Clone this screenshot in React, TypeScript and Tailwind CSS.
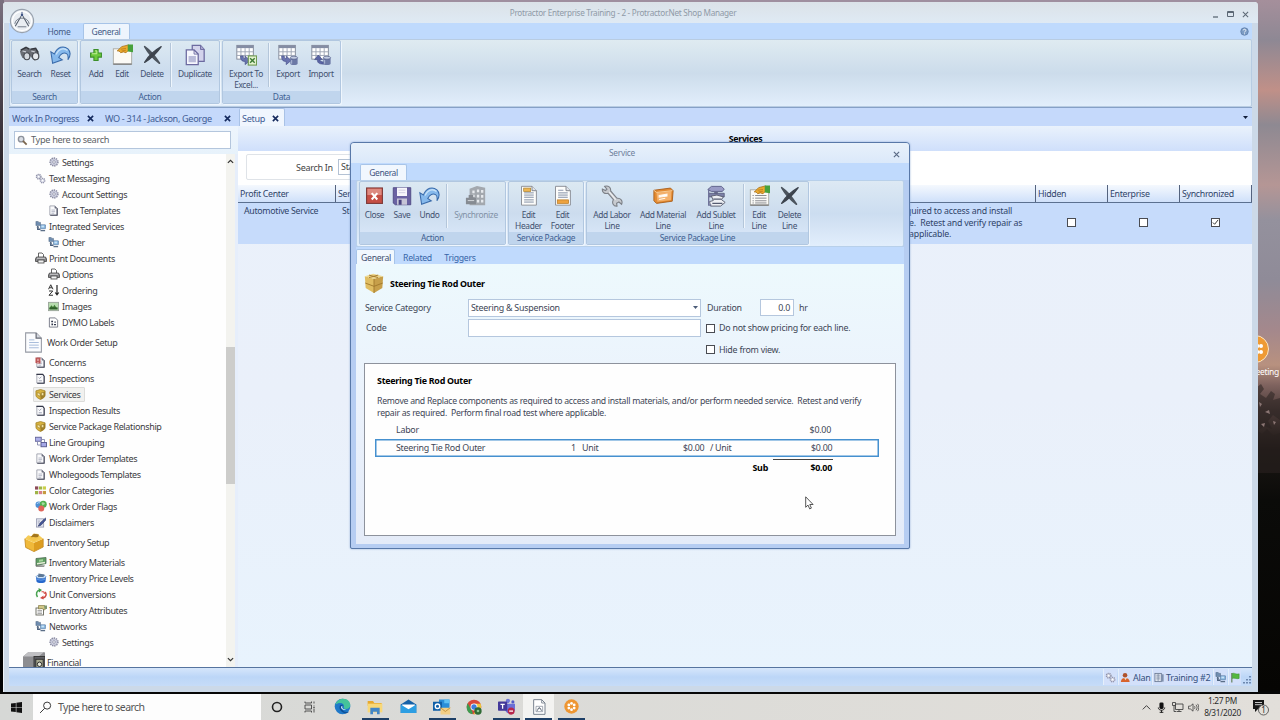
import React from "react";

type Kids = { children?: React.ReactNode };

/* ---------- icon helpers ---------- */
function Ico({ s = 12, children }: { s?: number } & Kids) {
  return (
    <svg width={s} height={s} viewBox="0 0 24 24" fill="none" className="block shrink-0">
      {children}
    </svg>
  );
}

const GearI = ({ s = 10 }) => (
  <Ico s={s}>
    <circle cx="12" cy="12" r="9.200" stroke="#8486a0" strokeWidth="4" strokeDasharray="3.200 2" />
    <circle cx="12" cy="12" r="8" fill="#cfd1e2" stroke="#8d8fa6" strokeWidth="1" />
    <circle cx="12" cy="12" r="3.200" fill="#f5f6fb" stroke="#85879c" strokeWidth="1.600" />
  </Ico>
);
const GearsI = ({ s = 11 }) => (
  <Ico s={s}>
    <circle cx="8" cy="8" r="5" fill="#d3d5e2" stroke="#9092a8" strokeWidth="3" strokeDasharray="2.4 1.4" />
    <circle cx="8" cy="8" r="1.8" fill="#fff" />
    <circle cx="16.5" cy="16.5" r="4.8" fill="#dcdeea" stroke="#9395ac" strokeWidth="3" strokeDasharray="2.4 1.4" />
    <circle cx="16.5" cy="16.5" r="1.6" fill="#fff" />
  </Ico>
);
const NetI = ({ s = 11 }) => (
  <Ico s={s}>
    <path d="M2 1h5l1 2h4v7H2z" fill="#6f8db0" stroke="#3f5876" />
    <path d="M6 11v7h6" stroke="#4a5f7c" strokeWidth="3" />
    <rect x="12" y="8" width="11" height="9" rx="1" fill="#7fb0dc" stroke="#42628a" />
    <rect x="14" y="10" width="6" height="4" fill="#c9e3f6" />
    <path d="M12 21h10M4 14h4" stroke="#5c6f88" strokeWidth="2.600" />
  </Ico>
);
const PrinterI = ({ s = 12 }) => (
  <Ico s={s}>
    <path d="M7 10V2h7l3 3v5" fill="#fff" stroke="#555" strokeWidth="1.800" />
    <path d="M3 10h18l2 4v5H1v-5z" fill="#8a8a8e" stroke="#444" strokeWidth="1.600" />
    <rect x="6" y="16" width="12" height="6" fill="#f2f2f2" stroke="#444" strokeWidth="1.600" />
    <path d="M4 12.500h16" stroke="#e0e0e0" strokeWidth="1.600" />
  </Ico>
);
const SortI = ({ s = 12 }) => (
  <Ico s={s}>
    <path d="M1 10.500L5.500 1.500l4.500 9M3 7.500h5M2 14h7.500L2 22.500H10" stroke="#333" strokeWidth="2" />
    <path d="M18 2v19M14.500 17l3.500 4.500 3.500-4.500" stroke="#222" strokeWidth="2.400" />
  </Ico>
);
const ImageI = ({ s = 11 }) => (
  <Ico s={s}>
    <rect x="1" y="3" width="22" height="18" fill="#b7dcae" stroke="#9aa59a" strokeWidth="2" />
    <path d="M3 17l4-8 4 4 3-5 6 9z" fill="#3f7d34" />
    <rect x="3" y="14" width="18" height="4.500" fill="#2f5f2b" />
  </Ico>
);
const DocI = ({ s = 11, red = false }: { s?: number; red?: boolean }) => (
  <Ico s={s}>
    <path d="M4 2h11l5 5v15H4z" fill="#fafafc" stroke="#8b8e9c" strokeWidth="1.600" />
    <path d="M20 7v15.500H5" stroke="#45485a" strokeWidth="2.400" />
    <path d="M15 2v5h5" fill="#6d7080" stroke="#6b6e7c" />
    <path d="M7.500 11h8M7.500 14.500h8M7.500 18h6" stroke="#9a9fb2" strokeWidth="1.500" />
    {red && <path d="M1 1h11v13H6L1 13z" fill="#b94848" opacity=".9" />}
    {red && <path d="M6.500 4v5M6.500 11v2" stroke="#f7dede" strokeWidth="2" />}
  </Ico>
);
const CheckDocI = ({ s = 11 }) => (
  <Ico s={s}>
    <path d="M4 3h12l4 4v15H4z" fill="#fafafc" stroke="#8b8e9c" strokeWidth="1.600" />
    <path d="M3 3h14l3 4v15.500H5" stroke="#35384a" strokeWidth="2.400" />
    <path d="M8 10l2 2 4-4M8 17h7" stroke="#8b90a4" strokeWidth="1.800" />
  </Ico>
);
const LabelDocI = ({ s = 11 }) => (
  <Ico s={s}>
    <path d="M3 2h13l5 5v15H3z" fill="#fff" stroke="#666a78" strokeWidth="1.800" />
    <path d="M7 8h4v3.500H7zM7.500 14H11v4H7.500zM14 10h3v2.500h-3zM13 15h4.500v3H13z" fill="#33384c" />
  </Ico>
);
const ShieldBoxI = ({ s = 11 }) => (
  <Ico s={s}>
    <path d="M2 4l10-3 10 3v10c0 4-5 6-10 9-5-3-10-5-10-9z" fill="#d7b23f" stroke="#94731b" strokeWidth="1.400" />
    <path d="M12 10l10-5v9c0 4-5 6-10 9z" fill="#a07f28" />
    <path d="M5 8l6 2v6l-6-3zM14 8h5v6h-5z" fill="#f7e7a8" stroke="#8a6d1c" />
  </Ico>
);
const GroupI = ({ s = 12 }) => (
  <Ico s={s}>
    <rect x="0.500" y="2.500" width="12" height="8" fill="#aeb0ea" stroke="#5c5f94" strokeWidth="1.800" />
    <path d="M5 12v6h6M14 7h5v5" stroke="#777ba4" strokeWidth="1.600" />
    <rect x="12" y="13" width="11" height="8.500" fill="#a4a7e6" stroke="#54578c" strokeWidth="1.800" />
  </Ico>
);
const ColorsI = ({ s = 11 }) => (
  <Ico s={s}>
    <path d="M0 3h7v7H0z" fill="#8c4a58" />
    <path d="M8.500 3h7v7h-7zM0 13h7v7H0z" fill="#9fb447" />
    <path d="M17 3h7v7h-7z" fill="#c9cf4a" />
    <path d="M8.500 13h7v7h-7z" fill="#d77f8d" />
    <path d="M17 13h7v7h-7z" fill="#c69a3f" />
  </Ico>
);
const FlagsI = ({ s = 12 }) => (
  <Ico s={s}>
    <circle cx="7.500" cy="9.500" r="6.500" fill="#4b8fd6" />
    <circle cx="16.500" cy="8.500" r="7" fill="#52b04e" />
    <circle cx="12.500" cy="17" r="6" fill="#e0655a" />
    <path d="M13 6c2-3 6-1 7 2l-5 3z" fill="#c8f0c0" opacity=".7" />
    <path d="M4 8c1-3 4-3 6-2" stroke="#cfe6fb" strokeWidth="1.600" />
  </Ico>
);
const DisclaimI = ({ s = 11 }) => (
  <Ico s={s}>
    <rect x="3" y="4" width="16" height="18" fill="#e4e6f0" stroke="#8a8fa8" strokeWidth="1.600" />
    <path d="M6 9h5M6 13h4" stroke="#8a8fa8" strokeWidth="1.400" />
    <path d="M23 2L11 13l-4 7 6-2L24 6z" fill="#44579a" stroke="#26305c" strokeWidth="1.200" />
  </Ico>
);
const MoneyI = ({ s = 12 }) => (
  <Ico s={s}>
    <path d="M2 5l20-2v12L2 19z" fill="#5f9f63" stroke="#4c6b50" strokeWidth="1.600" />
    <path d="M4 14l16-2.500v3L4 17z" fill="#e6ecd8" />
    <path d="M1 18.500l19 .5-2 2.500H2z" fill="#70756f" />
    <path d="M8 7.500l8-1v4l-8 1z" fill="#a6d59c" />
  </Ico>
);
const PriceI = ({ s = 12 }) => (
  <Ico s={s}>
    <path d="M2 10l1 9c2 4 16 4 18 0l1-9z" fill="#2768cc" />
    <ellipse cx="12" cy="9.500" rx="10" ry="3.500" fill="#d6e8fa" stroke="#3a74bd" strokeWidth="1.200" />
    <path d="M7 3l12 2-2 5H6z" fill="#5d7896" />
    <path d="M4 14c4 3 12 3 16 0" stroke="#6da4ec" strokeWidth="1.800" />
  </Ico>
);
const ConvI = ({ s = 12 }) => (
  <Ico s={s}>
    <path d="M10 4C3 5 1 12 5 18" stroke="#4aa352" strokeWidth="3" />
    <path d="M7 0l7 4-6 5z" fill="#3e9a45" />
    <path d="M16 20c6-1 8-8 4-12" stroke="#cf4b44" strokeWidth="3" />
    <path d="M10 20l7-5v8z" fill="#cf4b44" />
    <path d="M13 8c3-2 6 0 6 4" stroke="#dd6f68" strokeWidth="2.600" />
  </Ico>
);
const AttrI = ({ s = 12 }) => (
  <Ico s={s}>
    <rect x="2" y="8" width="15" height="14" fill="#fff" stroke="#66675c" strokeWidth="1.800" />
    <path d="M5 13h9M5 16h9M5 19h9" stroke="#888" strokeWidth="1.400" />
    <path d="M7 3h12l4 5-4 4-5-3-7 1z" fill="#cfc686" stroke="#7e7440" strokeWidth="1.300" />
    <path d="M18 3h6v7h-5z" fill="#7f9770" />
  </Ico>
);
const BigDocI = () => (
  <Ico s={21}>
    <path d="M3 1h12l6 6v16H3z" fill="#fbfcfe" stroke="#9599a3" strokeWidth="1.200" />
    <path d="M15 1v6h6" fill="#d4d8e0" stroke="#666a75" strokeWidth="1.400" />
    <path d="M7 9h6M7 12h11M7 15h11M7 18h11" stroke="#9db3d6" strokeWidth="1" />
  </Ico>
);
const CrateI = () => (
  <Ico s={20}>
    <path d="M1 8l11 5v10.500L2 18.500z" fill="#f0b93a" />
    <path d="M12 13l11-5v10l-11 5.500z" fill="#dd9d20" />
    <path d="M1 8l4-4 4 1 2-3 5 0 2 2 5 4-11 5z" fill="#f6cc58" />
    <path d="M8 6l4-4 6 1-1 3-6 2z" fill="#a3761e" />
    <path d="M5 7l6-1 7 1-6 4z" fill="#f3c54b" />
    <path d="M1 8l1 10.500 10 5 11-5.500V8" stroke="#c48a20" strokeWidth="1" />
  </Ico>
);
const SafeI = () => (
  <Ico s={22}>
    <path d="M0 6l6-5h17l1 1v22H0z" fill="#8d8d90" />
    <path d="M0 6l6-5h17l-6 5H0z" fill="#c0c0c3" />
    <rect x="12" y="6" width="12" height="18" fill="#5e5f63" stroke="#333" />
    <rect x="14" y="9" width="8" height="12" fill="#a6a890" stroke="#2c2c2c" />
    <circle cx="18" cy="14.500" r="2.400" fill="#e8e8d8" stroke="#222" />
  </Ico>
);

/* ---------- ribbon icons ---------- */
const BinocI = () => (
  <Ico s={21}>
    <path d="M1 8l5-4 5 2 3 0 4-1 5 6v5l-5 3-6-6-3 4-5-1-2-4z" fill="#6a6d74" />
    <path d="M2 7l6-3 4 2M13 6l6-1 3 5" stroke="#36393f" strokeWidth="1.800" />
    <ellipse cx="9" cy="14" rx="3.400" ry="4" fill="#d4d8de" stroke="#484b52" strokeWidth="1.300" />
    <ellipse cx="19" cy="14" rx="3.600" ry="4" fill="#e6e9ee" stroke="#484b52" strokeWidth="1.300" />
    <path d="M4 8l4 1M14 8l4 1" stroke="#c9ccd4" strokeWidth="1.400" />
  </Ico>
);
const UndoI = () => (
  <Ico s={21}>
    <path d="M1 9l2 13 11-4-4-2.500c2-5 6-6 9-4.500 2 1.300 2 4 1.500 7 3-4.500 3.500-9 0-12.500-5-4-12-2.500-15.500 6z" fill="#86b9ec" stroke="#3b6cab" strokeWidth="1.200" />
    <path d="M7 12c3-7 9-8 13-4.500" stroke="#c6e1f8" strokeWidth="1.600" />
  </Ico>
);
const PlusI = () => (
  <Ico s={20}>
    <path d="M9.500 5.500h5v4h4v5h-4v4h-5v-4h-4v-5h4z" fill="#6cc93c" stroke="#3c8f2a" strokeWidth="1.300" />
    <path d="M11 7h2v3.500H7" stroke="#c5f09b" strokeWidth="1.200" />
  </Ico>
);
const EditI = ({ lines = false }) => (
  <Ico s={21}>
    <rect x="1.500" y="5.500" width="21" height="17.500" fill="#fbfaf6" stroke="#a6a69e" strokeWidth="1" />
    <path d="M1.500 23h21" stroke="#777" strokeWidth="1.200" />
    {lines && <path d="M4 12h1.500M7 12h13M4 15h1.500M7 15h13M4 18h1.500M7 18h13M4 20.500h1.500M7 20.500h13" stroke="#7c7e84" strokeWidth="1" />}
    <path d="M6 8l5-5 8-2v6l-3 3-3-1-3 1-2-2z" fill="#eaa92e" stroke="#a96f14" strokeWidth=".9" />
    <path d="M10 6l6-1M11 8l5-1" stroke="#b5761a" strokeWidth=".8" />
    <path d="M18 0.500h6v9l-6-1z" fill="#47a13d" />
  </Ico>
);
const DeleteI = () => (
  <Ico s={21}>
    <path d="M3 3c6 4 12 11 17 19C13 17 7 10 3 3z" fill="#4c545e" stroke="#4c545e" strokeWidth="1.800" strokeLinejoin="round" />
    <path d="M22 3C15 7 7 14 3 21c7-4 14-11 19-18z" fill="#3d444e" stroke="#3d444e" strokeWidth="1.400" strokeLinejoin="round" />
  </Ico>
);
const DupI = () => (
  <Ico s={22}>
    <path d="M9 1.500h9l4 4.500V19H9z" fill="#d3d3ec" stroke="#6c6aa0" strokeWidth="1.400" />
    <path d="M18 1.500V6h4" fill="#a8a6d0" stroke="#6c6aa0" />
    <path d="M2.500 6.500H11l4.500 4.500V22.500h-13z" fill="#f6f6fd" stroke="#6c6aa0" strokeWidth="1.400" />
    <path d="M11 6.500V11h4.500" stroke="#6c6aa0" />
    <path d="M5 13h8v7H5z" fill="#b9bbd9" />
  </Ico>
);
const TableBase = () => (
  <>
    <rect x="2" y="1.500" width="18" height="15" fill="#fff" stroke="#808797" />
    <rect x="2" y="1.500" width="18" height="3" fill="#848da4" />
    <path d="M2 8.500h18M2 12.500h18M6.500 4.500v12M11 4.500v12M15.500 4.500v12" stroke="#9ba3b4" strokeWidth="1" />
  </>
);
const ExcelI = () => (
  <Ico s={22}>
    <TableBase />
    <path d="M6 13c0 4 1 6 5 6v3.500l5.500-4.500L11 13v3c-2 0-2-1-2-3z" fill="#6a74b0" stroke="#3d4680" strokeWidth=".6" />
    <rect x="14.500" y="13" width="9" height="10" fill="#e3f2cf" stroke="#6f9a52" strokeWidth="1.200" />
    <path d="M16.500 15.500l5 5M21.500 15.500l-5 5" stroke="#3c7a34" strokeWidth="1.500" />
  </Ico>
);
const Cyl = () => (
  <>
    <path d="M14.500 15v6.500c0 2 8 2 8 0V15z" fill="#6c79a6" />
    <ellipse cx="18.500" cy="15" rx="4" ry="1.600" fill="#c3cce2" stroke="#4d5985" strokeWidth=".7" />
    <path d="M16 17.500v4" stroke="#b7c1dc" />
  </>
);
const ExportI = () => (
  <Ico s={22}>
    <TableBase />
    <path d="M5 13c0 4 1 6 5 6v3.500l5.500-4.500L10 13v3c-2 0-2-1-2-3z" fill="#6a74b0" stroke="#3d4680" strokeWidth=".6" />
    <Cyl />
  </Ico>
);
const ImportI = () => (
  <Ico s={22}>
    <TableBase />
    <path d="M15 22c-6 0-7-2-7-5H5l4-5 4.500 5H11c0 2 1 2.500 4 2.500z" fill="#5a64a4" stroke="#3d4680" strokeWidth=".6" />
    <Cyl />
  </Ico>
);
const CloseI = () => (
  <Ico s={19}>
    <rect x="2" y="2.500" width="20" height="19.500" fill="#c54e44" stroke="#7e3a38" strokeWidth="1.400" />
    <path d="M3 3.500h18v8H3z" fill="#dd8a80" />
    <path d="M8.500 9l7 8M15.500 9l-7 8" stroke="#fff" strokeWidth="2.600" />
  </Ico>
);
const SaveI = () => (
  <Ico s={20}>
    <path d="M1.500 2h21v20.500H4l-2.500-2z" fill="#6a62a2" stroke="#4a4380" />
    <rect x="6" y="2" width="12" height="10" fill="#f7f6fb" />
    <path d="M8 5h8M8 8h8" stroke="#c9c5dc" />
    <rect x="6" y="15" width="12" height="7.500" fill="#c7c5d6" />
    <rect x="8" y="16.500" width="3.500" height="6" fill="#4a4380" />
  </Ico>
);
const SyncI = () => (
  <Ico s={22}>
    <path d="M5 4l8-3 9 2v19H5z" fill="#a3a8ae" />
    <path d="M8 6h2.500v3H8zM13 5h2.500v3H13zM17.500 5.500h2.500v3h-2.500zM8 10.500h2.500V13H8zM13 10.500h2.500v3H13zM17.500 11h2.500v3h-2.500zM13 16h2.500v3H13zM17.500 16h2.500v3h-2.500z" fill="#e7eaee" />
    <path d="M1 14h11v7H1zM4 11h5v4H4z" fill="#868b92" />
    <path d="M3 17h7" stroke="#d9dce0" />
  </Ico>
);
const PageI = ({ footer = false }) => (
  <Ico s={21}>
    <path d="M4 1.500h12l5 5V23H4z" fill="#fdfdfb" stroke="#8b8f96" strokeWidth="1.100" />
    <path d="M16 1.500v5h5" fill="#dfe3ea" stroke="#777b84" />
    <path d="M7 9h11M7 11.500h11M7 14h11" stroke="#7f8ca3" strokeWidth="1.100" />
    {footer ? <rect x="6" y="17" width="13" height="4" fill="#eda23f" stroke="#b8781f" strokeWidth=".8" /> : <path d="M7 17h11M7 19.500h11" stroke="#7f8ca3" strokeWidth="1.100" />}
    {footer ? <path d="M7 6h6" stroke="#7f8ca3" /> : <rect x="6.500" y="3.500" width="8" height="4" fill="#edb553" stroke="#a9812f" strokeWidth=".8" />}
  </Ico>
);
const WrenchI = () => (
  <Ico s={22}>
    <path d="M4 1.500c4-1.500 7 1.500 6.500 5l7 8c4-.5 6.500 3 5 6.500l-3-2.500-2.500 1.500.5 3c-4 .5-6-3.500-4-7L7.500 9C4 10 1 8 1.500 4.500L5 6l1.500-1.500z" fill="#c8cbd0" stroke="#7d8188" strokeWidth="1.200" />
    <path d="M9 7.500l7 8.500" stroke="#f0f1f3" strokeWidth="1.300" />
  </Ico>
);
const MaterialI = () => (
  <Ico s={21}>
    <path d="M1 6l19-2.500 3 3-1 12L4 21l-3-3z" fill="#e38b32" stroke="#a85c18" strokeWidth="1" />
    <path d="M4 9l17-2-.5 10L5 19z" fill="#f4b06a" />
    <path d="M7 12l9-1.500v2L7 14zM7 16.500l7-1.300" fill="#fff" stroke="#fff8ee" strokeWidth="1.200" />
    <path d="M1 6l3 2.500 18-2" stroke="#f8d6a6" />
  </Ico>
);
const SubletI = () => (
  <Ico s={22}>
    <path d="M7 1.500h11l3 3-2 2.500H7L3 5z" fill="#9a9cc6" stroke="#5b5d85" />
    <path d="M10 7h4v3h-4z" fill="#6c6e90" />
    <path d="M4 9h17v4H4z" fill="#7c80a6" stroke="#4f5272" strokeWidth=".8" />
    <path d="M7 12l6-1 7 2-2 3 4 3-5 4H6l-1-5 4-1z" fill="#eef0f4" stroke="#5a5d6e" strokeWidth="1" />
    <path d="M9 15.500h9M8 20h11" stroke="#555b70" strokeWidth="1.300" />
    <path d="M4 5v17h3" stroke="#6f739a" strokeWidth="1.500" />
  </Ico>
);

/* ---------- ribbon ---------- */
function Btn({ w, icon, a, b, dim }: { w: string; icon: React.ReactNode; a: string; b?: string; dim?: boolean }) {
  return (
    <div className={"flex shrink-0 flex-col items-center " + w}>
      <div className="flex h-[27px] items-center justify-center">{icon}</div>
      <div className={"mt-px flex flex-col items-center whitespace-nowrap text-[8.400px] leading-[10.500px] tracking-[-0.360px] " + (dim ? "text-[#8291a6]" : "text-[#42506f]")}>
        <span>{a}</span>
        {b && <span>{b}</span>}
      </div>
    </div>
  );
}
const Sep = ({ w }: { w: string }) => (
  <div className={"flex shrink-0 justify-center pt-[2px] " + w}>
    <div className="h-[44px] w-[2px] border-l border-[#b4c6da] bg-[#eef5fc]" />
  </div>
);
function Group({ w, title, pad, children }: { w: string; title: string; pad: string } & Kids) {
  return (
    <div className={"flex h-[64px] shrink-0 flex-col overflow-hidden rounded-[2px] border border-[#b1c7e0] bg-linear-to-b from-[#dce9f2] via-[#ccdcee] to-[#dceafb] shadow-[1px_1px_0_#eff6fd] " + w}>
      <div className={"flex h-[50px] " + pad}>{children}</div>
      <div className="flex h-[12px] items-center justify-center bg-[#c0d5ed] text-[8.400px] leading-none tracking-[-0.300px] text-[#3f5f92]">{title}</div>
    </div>
  );
}

/* ---------- sidebar ---------- */
const tree: [number, React.ReactNode, string][] = [
  [2, <GearI />, "Settings"],
  [1, <GearsI />, "Text Messaging"],
  [2, <GearI />, "Account Settings"],
  [2, <DocI />, "Text Templates"],
  [1, <NetI />, "Integrated Services"],
  [2, <NetI />, "Other"],
  [1, <PrinterI />, "Print Documents"],
  [2, <PrinterI />, "Options"],
  [2, <SortI />, "Ordering"],
  [2, <ImageI />, "Images"],
  [2, <LabelDocI />, "DYMO Labels"],
  [0, <BigDocI />, "Work Order Setup"],
  [1, <DocI red />, "Concerns"],
  [1, <CheckDocI />, "Inspections"],
  [1, <ShieldBoxI />, "Services"],
  [1, <CheckDocI />, "Inspection Results"],
  [1, <ShieldBoxI />, "Service Package Relationship"],
  [1, <GroupI />, "Line Grouping"],
  [1, <DocI />, "Work Order Templates"],
  [1, <DocI />, "Wholegoods Templates"],
  [1, <ColorsI />, "Color Categories"],
  [1, <FlagsI />, "Work Order Flags"],
  [1, <DisclaimI />, "Disclaimers"],
  [0, <CrateI />, "Inventory Setup"],
  [1, <MoneyI />, "Inventory Materials"],
  [1, <PriceI />, "Inventory Price Levels"],
  [1, <ConvI />, "Unit Conversions"],
  [1, <AttrI />, "Inventory Attributes"],
  [1, <NetI />, "Networks"],
  [2, <GearI />, "Settings"],
  [0, <SafeI />, "Financial"],
];

function TreeRow({ level, icon, label }: { level: number; icon: React.ReactNode; label: string }) {
  if (level === 0)
    return (
      <div className="flex h-6 shrink-0 items-center pl-[13px]">
        <div className="flex w-[23px] justify-center">{icon}</div>
        <span className="pl-[2px] pt-px">{label}</span>
      </div>
    );
  const on = label === "Services";
  return (
    <div className={"flex h-4 shrink-0 items-center " + (level === 1 ? "pl-[24px]" : "pl-[37px]")}>
      <div className={"flex items-center rounded-[1px] border pr-[3px] " + (on ? "h-[15px] border-[#dcdcda] bg-[#f1f1ef]" : "h-4 border-transparent")}>
        <div className="flex w-[13px] justify-center">{icon}</div>
        <span className="pl-[2px]">{label}</span>
      </div>
    </div>
  );
}

function Sidebar() {
  return (
    <div className="flex w-[229px] shrink-0 flex-col bg-[#eaf3fc]">
      <div className="flex h-[28px] shrink-0 items-center bg-linear-to-b from-[#eef5fd] to-[#e7f2fb] px-[5px]">
        <div className="flex h-[18px] w-[217px] items-center gap-[3px] border border-[#b4c6dd] bg-white pl-[2px] text-[9.200px] tracking-[-0.340px] text-[#5c5f66]">
          <Ico s={11}>
            <circle cx="9" cy="9" r="6" fill="#d9dde4" stroke="#8d929b" strokeWidth="3" />
            <path d="M13 13l8 8" stroke="#7b664e" strokeWidth="4" />
          </Ico>
          <span>Type here to search</span>
        </div>
      </div>
      <div className="flex h-[513px] overflow-hidden">
        <div className="flex w-[217px] flex-col overflow-hidden bg-[#fefefe] whitespace-nowrap text-[9px] leading-none tracking-[-0.350px] text-[#3c3c3e]">
          {tree.map(([l, i, t], k) => (
            <TreeRow key={k} level={l} icon={i} label={t} />
          ))}
        </div>
        <div className="flex w-[9px] flex-col items-center justify-between bg-[#f3f3ef] py-[4px]">
          <Ico s={7}><path d="M3 17l9-9 9 9" stroke="#333" strokeWidth="4" /></Ico>
          <div className="mt-[9px] h-[137px] w-[9px] bg-[#cdcdcb]" />
          <Ico s={7}><path d="M3 7l9 9 9-9" stroke="#333" strokeWidth="4" /></Ico>
        </div>
        <div className="w-[3px] bg-[#e6eefb]" />
      </div>
    </div>
  );
}

const Check = ({ on = false }: { on?: boolean }) => (
  <div className="flex size-[9px] shrink-0 items-center justify-center border border-[#4a4c52] bg-white">
    {on && (
      <svg width="7" height="7" viewBox="0 0 8 8" fill="none"><path d="M1 4l2 2 4-5" stroke="#333" strokeWidth="1.100" /></svg>
    )}
  </div>
);

/* ---------- services grid ---------- */
function ServicesPane() {
  return (
    <div className="flex min-w-0 grow flex-col overflow-hidden whitespace-nowrap bg-linear-to-b from-[#eaf1fb] via-[#eaf0fa] to-[#e8f3fd] text-[8.800px] tracking-[-0.300px] text-[#2f4368]">
      <div className="flex h-[25px] shrink-0 items-center justify-center bg-linear-to-b from-[#eaf2fc] to-[#cfdffb] text-[8.800px] font-bold tracking-[-0.300px] text-black">
        <span className="pl-px pt-[2px]">Services</span>
      </div>
      <div className="flex h-[34px] shrink-0 bg-white pl-[8px]">
        <div className="mt-[3px] flex h-[26px] w-[400px] items-center rounded-[2px] border border-[#dfe3e8] pl-[49px] text-[9px] text-[#444]">
          <span className="w-[42px] pt-px">Search In</span>
          <span className="flex h-[16px] w-[120px] items-center border border-[#b4c2d4] pl-[2px]">Start</span>
        </div>
      </div>
      <div className="flex h-[18px] shrink-0 border-b border-[#5b7090] bg-linear-to-b from-[#f5f9fe] to-[#cfe0fa] leading-[19px]">
        <div className="w-[98px] border-r border-[#54637e] pl-[2px]">Profit Center</div>
        <div className="w-[700px] border-r border-[#54637e] pl-[2px]">Service</div>
        <div className="w-[72px] border-r border-[#54637e] pl-[2px]">Hidden</div>
        <div className="w-[72px] border-r border-[#54637e] pl-[2px]">Enterprise</div>
        <div className="w-[72px] border-r border-[#54637e] pl-[2px]">Synchronized</div>
      </div>
      <div className="flex h-[41px] shrink-0 bg-[#c6dbfb]">
        <div className="w-[98px] pl-[6px] pt-[2px] leading-[13px]">Automotive Service</div>
        <div className="w-[561px] pl-[6px] pt-[2px] leading-[13px]">Steering Tie Rod Outer</div>
        <div className="w-[139px] pl-px pt-[3px] leading-[11.700px] tracking-[-0.200px]">
          <div>required to access and install</div>
          <div className="pl-[5px]">ice.&nbsp; Retest and verify repair as</div>
          <div className="pl-[11px]">applicable.</div>
        </div>
        <div className="flex w-[72px] items-center justify-center pb-[2px] pr-[2px]"><Check /></div>
        <div className="flex w-[72px] items-center justify-center pb-[2px] pr-[2px]"><Check /></div>
        <div className="flex w-[72px] items-center justify-center pb-[2px] pr-[2px]"><Check on /></div>
      </div>
    </div>
  );
}

/* ---------- service dialog ---------- */
function ServiceDialog() {
  return (
    <div className="absolute left-[350px] top-[142px] flex h-[407px] w-[560px] flex-col rounded-t-[4px] rounded-b-[2px] border border-[#5878a8] bg-[#b6cdf2] px-[5px] pb-[4px] shadow-[0_0_2px_#8aa6d0]">
      <div className="-mx-[5px] flex h-[20px] shrink-0 items-center rounded-t-[3px] bg-linear-to-b from-[#e8f1fb] to-[#dbe9fa] pr-[9px] text-[8.300px] tracking-[-0.250px] text-[#6e7f9c]">
        <span className="w-[543px] text-center">Service</span>
        <div className="pt-[2px]">
          <Ico s={7}><path d="M3 3l18 18M21 3L3 21" stroke="#5a6a85" strokeWidth="4" /></Ico>
        </div>
      </div>
      <div className="-mx-[5px] flex h-[17px] shrink-0 items-end bg-[#c0dafd] pl-[9px] text-[8.500px] text-[#3f5580]">
        <div className="flex h-[16px] w-[47px] items-center justify-center rounded-t-[2px] border border-b-0 border-[#a7c4e8] bg-[#f1f7fe] pt-px tracking-[-0.400px]">General</div>
      </div>
      <div className="flex h-[67px] shrink-0 gap-[2px] rounded-[2px] border border-[#b8d0ea] bg-linear-to-b from-[#dde9f4] via-[#ccddf0] to-[#e2eefc] pl-[2px]">
        <Group w="w-[147px]" title="Action" pad="pl-[1px]">
          <Btn w="w-[27px]" icon={<CloseI />} a="Close" />
          <Btn w="w-[28px]" icon={<SaveI />} a="Save" />
          <Btn w="w-[27px]" icon={<UndoI />} a="Undo" />
          <Sep w="w-[8px]" />
          <Btn w="w-[50px]" icon={<SyncI />} a="Synchronize" dim />
        </Group>
        <Group w="w-[76px]" title="Service Package" pad="pl-[3px]">
          <Btn w="w-[33px]" icon={<PageI />} a="Edit" b="Header" />
          <Btn w="w-[35px]" icon={<PageI footer />} a="Edit" b="Footer" />
        </Group>
        <Group w="w-[223px]" title="Service Package Line" pad="pl-[1px]">
          <Btn w="w-[48px]" icon={<WrenchI />} a="Add Labor" b="Line" />
          <Btn w="w-[54px]" icon={<MaterialI />} a="Add Material" b="Line" />
          <Btn w="w-[52px]" icon={<SubletI />} a="Add Sublet" b="Line" />
          <Sep w="w-[3px]" />
          <Btn w="w-[28px]" icon={<EditI lines />} a="Edit" b="Line" />
          <Btn w="w-[33px]" icon={<DeleteI />} a="Delete" b="Line" />
        </Group>
      </div>
      <div className="flex h-[17px] shrink-0 items-end bg-[#c0dafd] text-[8.700px] leading-none tracking-[-0.280px] text-[#3565a8]">
        <div className="flex h-[15px] w-[39px] items-center justify-center rounded-t-[2px] border border-b-0 border-[#a7c4e8] bg-[#f1f8fe] pl-px pt-[2px] text-[#3f5070]">General</div>
        <div className="flex h-[15px] w-[45px] items-center justify-center pt-[3px]">Related</div>
        <div className="flex h-[15px] w-[40px] items-center justify-center pt-[3px]">Triggers</div>
      </div>
      <div className="flex grow flex-col bg-linear-to-b from-[#edf9fd] via-[#ebf2fc] to-[#e4ebf8] pl-[8px] pt-[8px] text-[8.900px] leading-none tracking-[-0.250px] text-[#3e4656]">
        <div className="flex h-[22px] items-center gap-[5px]">
          <Ico s={20}>
            <path d="M1 4l11 3v17L2 18z" fill="#e0bd62" />
            <path d="M12 7l11-3-1 14-10 6z" fill="#c79f4a" />
            <path d="M1 4l10-3 12 3-11 3z" fill="#eed68c" />
            <path d="M6 2.500l11 3M17 2.500L6 5.500M12 7v17M1.500 12l10.500 4 10.500-4" stroke="#a1782c" strokeWidth="1.100" />
          </Ico>
          <span className="pl-px pt-[2px] font-bold text-black">Steering Tie Rod Outer</span>
        </div>
        <div className="mt-[4px] flex h-[19px] items-center">
          <span className="w-[104px] pl-px pt-[2px]">Service Category</span>
          <div className="flex h-[18px] w-[233px] items-center justify-between border border-[#b5c7de] bg-white pl-[2px] pr-[2px]">
            <span className="pt-px">Steering &amp; Suspension</span>
            <svg width="5" height="3" viewBox="0 0 5 3"><path d="M0 0h5L2.500 3z" fill="#4c5c78" /></svg>
          </div>
          <span className="w-[59px] pl-[6px] pt-[2px]">Duration</span>
          <div className="flex h-[17px] w-[34px] items-center justify-end border border-[#b5c7de] bg-white pr-[3px] pt-px">0.0</div>
          <span className="pl-[5px] pt-[2px]">hr</span>
        </div>
        <div className="mt-px flex h-[19px] items-center">
          <span className="w-[104px] pl-[2px] pt-[2px]">Code</span>
          <div className="h-[18px] w-[233px] border border-[#b5c7de] bg-white" />
          <div className="flex items-center gap-[4px] pl-[5px] pt-px"><Check /> <span className="pt-px">Do not show pricing for each line.</span></div>
        </div>
        <div className="mt-[4px] flex h-[16px] items-center pl-[342px]">
          <div className="flex items-center gap-[4px] pt-px"><Check /> <span className="pt-px">Hide from view.</span></div>
        </div>
        <div className="mt-[6px] flex h-[173px] w-[532px] flex-col border border-[#8d929c] bg-[#fefefe] pl-[10px] pt-[12px]">
          <span className="pl-[2px] pt-px font-bold text-black">Steering Tie Rod Outer</span>
          <div className="mt-[9px] whitespace-nowrap pl-[2px] text-[8.700px] leading-[12px] tracking-[-0.272px]">
            <div>Remove and Replace components as required to access and install materials, and/or perform needed service.&nbsp; Retest and verify</div>
            <div>repair as required.&nbsp; Perform final road test where applicable.</div>
          </div>
          <div className="mt-[4px] flex h-[16px] items-center justify-between pl-[21px] pr-[64px]">
            <span>Labor</span>
            <span>$0.00</span>
          </div>
          <div className="flex h-[18px] w-[504px] shrink-0 items-center border-[1.500px] border-[#4590cf] pl-[20px] pt-px shadow-[inset_0_0_0_.5px_#4590cf]">
            <span className="w-[175px]">Steering Tie Rod Outer</span>
            <span className="w-[11px]">1</span>
            <span className="w-[101px]">Unit</span>
            <span className="w-[27px]">$0.00</span>
            <span className="w-[101px]">/ Unit</span>
            <span>$0.00</span>
          </div>
          <div className="mt-[2px] flex font-bold text-black">
            <span className="w-[398px] pr-[5px] pt-[5px] text-right">Sub</span>
            <span className="w-[60px] border-t border-[#444] pr-px pt-[4px] text-right">$0.00</span>
          </div>
        </div>
      </div>
      <svg className="absolute left-[454px] top-[353px]" width="9" height="14" viewBox="0 0 9 14">
        <path d="M.7.800v10.500l2.300-2.200 1.700 3.800 1.700-.8-1.600-3.600h3.300z" fill="#fff" stroke="#444" strokeWidth=".9" />
      </svg>
    </div>
  );
}

/* ---------- main window ---------- */
const DocTab = ({ w, label, active }: { w: string; label: string; active?: boolean }) => (
  <div className={"flex shrink-0 items-center justify-between whitespace-nowrap pr-[5px] " + w + (active ? " h-[18px] rounded-t-[2px] border border-b-0 border-[#a9c2e6] bg-[#f0f6fe] pl-[2px]" : " h-[18px] pl-[3px]")}>
    <span className="pt-[3px]">{label}</span>
    <div className="pt-[2px]">
      <Ico s={7}><path d="M3 3l18 18M21 3L3 21" stroke="#152a5e" strokeWidth="5.500" /></Ico>
    </div>
  </div>
);

function MainWindow() {
  return (
    <div className="absolute left-[3px] top-[2px] flex h-[690px] w-[1255px] flex-col rounded-t-[4px] bg-[#ccd9e8] px-[6px] pb-[5px] shadow-[inset_1px_1px_0_#eef3f8]">
      <div className="-mx-[6px] flex h-[21px] shrink-0 items-center rounded-t-[4px] bg-linear-to-b from-[#dbe2e8] to-[#dfeaf4] pr-[9px] text-[8.200px] tracking-[-0.290px] text-[#8f9aa7]">
        <span className="grow pl-[30px] pt-px text-center">Protractor Enterprise Training - 2 - Protractor.Net Shop Manager</span>
        <div className="flex w-[36px] items-center justify-between pt-[3px]">
          <svg width="6" height="7" viewBox="0 0 6 7"><path d="M0 6h5" stroke="#5c6875" strokeWidth="1.300" /></svg>
          <svg width="7" height="6" viewBox="0 0 7 6"><path d="M.5.500h6v5h-6zM.5 1.500h6" fill="none" stroke="#5c6875" strokeWidth="1" /></svg>
          <Ico s={7}><path d="M3 3l18 18M21 3L3 21" stroke="#5c6875" strokeWidth="3.500" /></Ico>
        </div>
      </div>
      <div className="flex h-[16px] shrink-0 items-center justify-between bg-[#bfdafd] pr-[3px] text-[8.500px] tracking-[-0.350px] text-[#445a86]">
        <div className="flex items-end">
          <div className="flex h-[16px] w-[74px] items-center justify-center pl-[26px] pt-[2px]">Home</div>
          <div className="flex h-[16px] w-[47px] items-center justify-center rounded-t-[2px] border border-b-0 border-[#a7c4e8] bg-[#eef5fd] pr-px pt-px">General</div>
        </div>
        <Ico s={9}>
          <circle cx="12" cy="12" r="10" fill="#7c9cc4" stroke="#5a7aa6" strokeWidth="2" />
          <path d="M8.500 9c0-4 7-4 7 0 0 3-3.500 2.500-3.500 5.500M12 17v2.500" stroke="#fff" strokeWidth="2.400" />
        </Ico>
      </div>
      <div className="flex h-[68px] shrink-0 gap-[2px] rounded-[2px] border border-[#b8cce2] bg-linear-to-b from-[#dfebf1] via-[#ccdceb] to-[#e2eefb] pl-px">
        <Group w="w-[67px]" title="Search" pad="">
          <Btn w="w-[35px]" icon={<BinocI />} a="Search" />
          <Btn w="w-[27px]" icon={<UndoI />} a="Reset" />
        </Group>
        <Group w="w-[140px]" title="Action" pad="pl-[2px]">
          <Btn w="w-[26px]" icon={<PlusI />} a="Add" />
          <Btn w="w-[26px]" icon={<EditI />} a="Edit" />
          <Btn w="w-[34px]" icon={<DeleteI />} a="Delete" />
          <Sep w="w-[4px]" />
          <Btn w="w-[44px]" icon={<DupI />} a="Duplicate" />
        </Group>
        <Group w="w-[119px]" title="Data" pad="pl-[2px]">
          <Btn w="w-[42px]" icon={<ExcelI />} a="Export To" b="Excel..." />
          <Sep w="w-[4px]" />
          <Btn w="w-[34px]" icon={<ExportI />} a="Export" />
          <Btn w="w-[32px]" icon={<ImportI />} a="Import" />
        </Group>
      </div>
      <div className="flex h-[19px] shrink-0 items-end border-t border-[#86a0c6] bg-[#c5d9fb] text-[9.100px] tracking-[-0.320px] text-[#3f5c94]">
        <DocTab w="w-[90px] tracking-[-0.400px]" label="Work In Progress" />
        <div className="w-px" />
        <DocTab w="w-[136px] pl-[5px]" label="WO - 314 - Jackson, George" />
        <div className="w-[3px]" />
        <DocTab w="w-[46px]" label="Setup" active />
        <div className="flex h-[18px] grow items-center justify-end pr-[4px]">
          <svg width="5" height="3" viewBox="0 0 5 3"><path d="M0 0h5L2.500 3z" fill="#111e3c" /></svg>
        </div>
      </div>
      <div className="flex h-[541px] shrink-0">
        <Sidebar />
        <ServicesPane />
      </div>
      <div className="flex h-[19px] shrink-0 items-center justify-end gap-px border-t border-[#56749f] bg-linear-to-b from-[#d6e6fb] via-[#bcd6f7] to-[#c6dcf8] text-[9px] tracking-[-0.300px] text-[#34507e]">
        <div className="flex h-[16px] w-[14px] items-center justify-center border-l border-[#e5effb] bg-[#d3e0fa]"><GearsI s={11} /></div>
        <div className="flex h-[16px] w-[33px] items-center gap-[2px] border-l border-[#e5effb] bg-[#d3e0fa] pl-px">
          <Ico s={11}>
            <circle cx="11" cy="7" r="5" fill="#b0522c" />
            <path d="M2 22c0-7 4-9 9-9s10 2 10 9z" fill="#d8632c" />
            <path d="M9 13l3 5 3-5z" fill="#f6e0c6" />
          </Ico>
          <span className="pt-px">Alan</span>
        </div>
        <div className="flex h-[16px] w-[60px] items-center gap-[1px] whitespace-nowrap border-l border-[#e5effb] bg-[#d3e0fa] pl-px">
          <Ico s={11}>
            <rect x="2" y="3" width="14" height="18" fill="#e3e8f0" stroke="#66758f" strokeWidth="1.800" />
            <path d="M5 7h8M5 11h8M5 15h8M9 4v16" stroke="#76859f" strokeWidth="1.500" />
            <rect x="15" y="5" width="6" height="16" fill="#7f90ad" />
          </Ico>
          <span className="pt-px">Training #2</span>
        </div>
        <div className="flex h-[16px] w-[14px] items-center justify-center border-l border-[#e5effb] bg-[#d3e0fa]"><NetI s={11} /></div>
        <div className="flex h-[16px] w-[13px] items-center justify-center border-l border-[#e5effb] bg-[#d3e0fa]">
          <Ico s={11}>
            <path d="M4 2v21" stroke="#5c7a50" strokeWidth="2.400" />
            <path d="M5 3c5-2 8 3 15 1v10c-6 2-10-2-15 0z" fill="#53b83f" stroke="#348a2a" />
          </Ico>
        </div>
        <svg width="10" height="14" viewBox="0 0 10 14"><path d="M8 6v1.500M5 9v1.500M8 9v1.500M2 12v1.500M5 12v1.500M8 12v1.500" stroke="#4a6690" strokeWidth="1.400" /></svg>
      </div>
      <svg className="absolute left-[6px] top-[6px]" width="26" height="26" viewBox="0 0 27 27" fill="none">
        <circle cx="13.500" cy="13.500" r="12" fill="#e9edf2" stroke="#98a1ad" strokeWidth="1.200" />
        <circle cx="13.500" cy="13.500" r="10" stroke="#fff" strokeWidth="1.200" />
        <path d="M12.500 8.500L6.500 19M14.500 8.500l6 10.500" stroke="#555e6c" strokeWidth="1.100" />
        <path d="M6 16.500c1-8 14-8 15 0M9 19.500h9" stroke="#727b88" strokeWidth="1" />
        <circle cx="13.500" cy="7.200" r="1.300" fill="#3e5484" />
        <path d="M13.500 4v3" stroke="#3e5484" />
      </svg>
      <DialogLayer />
    </div>
  );
}

/* The dialog is placed in desktop coordinates, so it is lifted out of the frame's own offset. */
const DialogLayer = () => (
  <div className="absolute -left-[3px] -top-[2px]">
    <ServiceDialog />
  </div>
);

/* ---------- taskbar ---------- */
const Task = ({ w, on, hot, children }: { w: string; on?: boolean; hot?: boolean } & Kids) => (
  <div className={"flex h-full shrink-0 flex-col items-center " + w + (hot ? " bg-[#f3f3f1]" : "")}>
    <div className="flex grow items-center justify-center pt-px">{children}</div>
    <div className={"h-[2px] w-[27px] " + (on ? "bg-[#1d3f66]" : "bg-transparent")} />
  </div>
);

function Taskbar() {
  return (
    <div className="absolute inset-x-0 bottom-0 flex h-[26px] items-stretch bg-linear-to-r from-[#d6d8d6] to-[#e2dfda]">
      <div className="flex w-[33px] items-center justify-center">
        <svg width="11" height="11" viewBox="0 0 11 11"><path d="M0 1.600L4.800.900v4.300H0zM5.400.800L11 0v5.200H5.400zM0 5.800h4.800v4.300L0 9.400zM5.400 5.800H11V11l-5.600-.8z" fill="#111" /></svg>
      </div>
      <div className="flex w-[228px] items-center gap-[6px] bg-[#fdfdfd] pl-[6px] text-[10.500px] text-[#555]">
        <Ico s={13}><circle cx="15" cy="8.500" r="6.500" stroke="#333" strokeWidth="1.800" /><path d="M10.500 13.500L2 22" stroke="#333" strokeWidth="1.800" /></Ico>
        <span className="pt-px tracking-[-0.530px]">Type here to search</span>
      </div>
      <Task w="w-[32px]"><Ico s={12}><circle cx="12" cy="12" r="9" stroke="#222" strokeWidth="3.200" /></Ico></Task>
      <Task w="w-[33px]">
        <Ico s={12}><path d="M2 8h13v8H2zM2 1v3h13V1M2 23v-3h13v3M20 1v4M20 9v2M20 16v7M18 13.500h4" stroke="#444" strokeWidth="1.800" /></Ico>
      </Task>
      <Task w="w-[33px]">
        <Ico s={17}>
          <circle cx="12" cy="12" r="11" fill="#1f78c8" />
          <path d="M2 9C4 3 9 1 13 1c7 0 10 5 10 9 0 4-3 5.500-6 5.500-3 0-4-1-3-3 1-3-2-5.500-5-5.500-3 0-5 1-7 2z" fill="#45c39a" />
          <path d="M9 10c-3 4 0 10 6 11.500 3 .5 5-1 6.500-2.500-5 2-10 0-10-5 0-2 1-3 1.500-4-1-.7-3-.7-4 0z" fill="#0d4f96" />
          <path d="M12 11c-1.500 3 1 5.500 5 5.500-2 1.500-7 0-7-3 0-1.500 1-2 2-2.500z" fill="#e6f4fa" />
        </Ico>
      </Task>
      <Task w="w-[32px]" on>
        <Ico s={16}>
          <path d="M1 3h8l2 3h11v4H1z" fill="#e8a92d" />
          <path d="M1 7h22v13H1z" fill="#f8d878" />
          <path d="M5 13h14v10h-4v-4H9v4H5z" fill="#4286c8" />
        </Ico>
      </Task>
      <Task w="w-[35px]">
        <Ico s={17}>
          <path d="M1 9l11-7 11 7v12H1z" fill="#1461a8" />
          <path d="M3 9h18v6l-9 5-9-5z" fill="#fff" />
          <path d="M1 9l11 7 11-7v12H1z" fill="#2c9ee2" />
        </Ico>
      </Task>
      <Task w="w-[32px]" on>
        <Ico s={18}>
          <path d="M8 2h14v14H8z" fill="#2a8ed8" />
          <path d="M15 2h7v5h-7z" fill="#5fc0f3" />
          <rect x="0" y="5" width="12" height="12" fill="#0f5fa8" />
          <circle cx="6" cy="11" r="3" stroke="#fff" strokeWidth="1.800" />
          <path d="M10 13h13v9H10z" fill="#f2cf87" />
          <path d="M10 13l6.500 5L23 13" stroke="#c2913a" strokeWidth="1.200" />
        </Ico>
      </Task>
      <Task w="w-[32px]">
        <Ico s={16}>
          <circle cx="12" cy="12" r="11" fill="#d9473a" />
          <path d="M2.500 6.500L10 20l-.5 2.800C3 22 1 16 1 12c0-2 .5-4 1.500-5.500z" fill="#3d9b50" />
          <path d="M12 7h10c3 8-3 16-11 16l5-8z" fill="#efc53c" />
          <circle cx="12" cy="12" r="5.200" fill="#fff" />
          <circle cx="12" cy="12" r="4" fill="#3f7fdc" />
          <circle cx="18" cy="18" r="5.500" fill="#2f6a35" />
          <circle cx="18" cy="18" r="2" fill="#8cc48c" />
        </Ico>
      </Task>
      <Task w="w-[33px]" on>
        <Ico s={17}>
          <circle cx="14" cy="4" r="3" fill="#6f76d8" />
          <circle cx="21" cy="5.500" r="2.200" fill="#5059c9" />
          <path d="M10 8h14v8c0 4-4 6-7 6s-7-2-7-6z" fill="#6a70d6" />
          <rect x="0" y="5" width="13" height="13" rx="1" fill="#43389a" />
          <path d="M3.500 9h6M6.500 9v6" stroke="#fff" strokeWidth="1.800" />
          <circle cx="18.500" cy="18.500" r="5" fill="#b8274c" />
          <path d="M15.800 18.500h5.400" stroke="#fff" strokeWidth="1.800" />
        </Ico>
      </Task>
      <Task w="w-[31px]" on hot>
        <Ico s={16}>
          <path d="M4 1h12l5 5v17H4z" fill="#fff" stroke="#78828f" strokeWidth="1.500" />
          <path d="M16 1v5h5" stroke="#78828f" strokeWidth="1.300" />
          <path d="M7.500 11h10v8h-10z" stroke="#78828f" />
          <path d="M9 18l3.500-5.500L16 18M9.500 15.500c1-2 5-2 6 0" stroke="#66707e" strokeWidth="1.200" />
        </Ico>
      </Task>
      <Task w="w-[35px]" on>
        <Ico s={15}>
          <circle cx="12" cy="12" r="11.500" fill="#ee9632" />
          <circle cx="12" cy="7" r="2.200" fill="#fff" /><circle cx="12" cy="17" r="2.200" fill="#fff" />
          <circle cx="7.700" cy="9.500" r="2.200" fill="#fff" /><circle cx="16.300" cy="9.500" r="2.200" fill="#fff" />
          <circle cx="7.700" cy="14.500" r="2.200" fill="#fff" /><circle cx="16.300" cy="14.500" r="2.200" fill="#fff" />
        </Ico>
      </Task>
      <div className="flex grow items-center justify-end pr-[10px] text-[8.300px] leading-none tracking-[-0.300px] text-[#2c2c2c]">
        <Ico s={9}><path d="M2 17l10-10 10 10" stroke="#333" strokeWidth="2.500" /></Ico>
        <div className="ml-[5px]">
          <Ico s={11}><rect x="7.500" y="1" width="9" height="14" rx="3" fill="#111" /><path d="M5 12c0 8 14 8 14 0M12 18v5M8 22.500h8" stroke="#111" strokeWidth="2" /></Ico>
        </div>
        <div className="ml-[5px]">
          <Ico s={12}><path d="M7 6h15v11H7zM10 21h9M14 17v4M1 3h6v6H1zM4 9v12h5" stroke="#444" strokeWidth="1.800" /></Ico>
        </div>
        <div className="ml-[4px]">
          <Ico s={11}><path d="M1 9h4l6-5v16l-6-5H1zM14 9c1.500 2 1.500 4 0 6M17.500 6c3 4 3 8 0 12M21 4c3.500 5 3.500 11 0 16" stroke="#444" strokeWidth="1.800" /></Ico>
        </div>
        <div className="ml-[5px] flex w-[37px] flex-col items-center gap-[4px] whitespace-nowrap">
          <span>1:27 PM</span>
          <span>8/31/2020</span>
        </div>
        <svg width="17" height="18" viewBox="0 0 17 18" className="ml-[12px]" fill="none">
          <path d="M0 2h11v9H5l-3 3v-3H0z" fill="#161616" />
          <path d="M2 4.500h7M2 6.700h7" stroke="#ddd" strokeWidth=".9" />
          <circle cx="10.500" cy="12" r="5" fill="#e2dfda" stroke="#555" strokeWidth=".9" />
          <text x="10.500" y="15" textAnchor="middle" fontSize="8" fill="#222">1</text>
        </svg>
      </div>
    </div>
  );
}

/* ---------- desktop ---------- */
function Wallpaper() {
  return (
    <div className="flex h-[693px] justify-between bg-[#9f8f9f]">
      <div className="w-[4px] bg-linear-to-b from-[#7b7180] from-0% via-[#1b1518] via-30% to-[#020202]" />
      <div className="flex w-[24px] items-start bg-[linear-gradient(180deg,#a58f9b_0px,#8e8894_40px,#c09088_90px,#8e8992_125px,#b59695_185px,#94919d_220px,#8f8b98_280px,#a4888c_330px,#b8917f_365px,#7f635f_385px,#4a3a38_410px,#1a1613_450px,#0b0b09_500px,#060503_690px)]">
        <svg width="24" height="500" viewBox="0 0 24 500" fill="#2a2220">
          <path d="M0 388l5-4 3 5-4 5 6 4 5-7 4 3-2 6 7-2v22l-7-5-5 6 4 8-8-3-8 6z" opacity=".55" />
          <path d="M0 430l6 4 5-5 6 7 7-3v40H0z" opacity=".6" />
          <path d="M3 402l3 2-2 3zM9 412l4-2 1 4zM5 424l4-1-1 4zM17 421l3 1-2 3z" fill="#8b7674" />
        </svg>
      </div>
    </div>
  );
}

export default function App() {
  return (
    <div className="relative h-[720px] w-[1280px] overflow-hidden bg-[#050505] font-['Noto_Sans',sans-serif]">
      <Wallpaper />
      <div className="absolute left-[1240px] top-[335px] flex w-[60px] flex-col items-start">
        <div className="ml-px flex size-[28px] items-center justify-end rounded-full border border-[#fbe7c8] bg-[#ee9a34] pr-[5px]">
          <svg width="8" height="12" viewBox="0 0 8 12"><circle cx="2" cy="3" r="2.200" fill="#fff" /><circle cx="6" cy="3" r="2" fill="#fff" /><circle cx="2" cy="9" r="2.200" fill="#fff" /><circle cx="6" cy="9" r="2" fill="#fff" /></svg>
        </div>
        <span className="ml-[8px] mt-[5px] text-[8.500px] leading-none tracking-[-0.300px] text-white">Meeting</span>
      </div>
      <div className="absolute inset-x-0 top-[691px] h-[4px] bg-[#060606]" />
      <MainWindow />
      <Taskbar />
    </div>
  );
}
